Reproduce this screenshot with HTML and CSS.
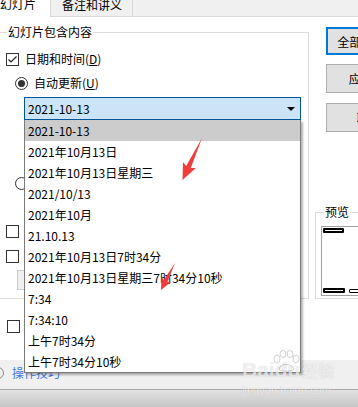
FILE: index.html
```html
<!DOCTYPE html>
<html lang="zh-CN">

<head>
    <meta charset="UTF-8">
    <meta name="viewport" content="width=device-width, initial-scale=1.0">
    <title>页眉和页脚</title>
    <link rel="stylesheet" href="styles.css">
</head>

<body>
    <div class="dialog">
        <div class="tabs">
            <div class="tab active">幻灯片</div>
            <div class="tab">备注和讲义</div>
        </div>

        <div class="panel">
            <div class="left">
                <fieldset class="group main-group">
                    <legend>幻灯片包含内容</legend>
                    <label class="check row-date">
                        <span class="box"><svg width="11" height="11" viewBox="0 0 11 11"><polyline points="1.5,5.5 4,8 9.5,2.5" fill="none" stroke="#222" stroke-width="1.2"/></svg></span>
                        日期和时间(<u>D</u>)
                    </label>
                    <label class="radio row-auto"><span class="dot on"></span>自动更新(<u>U</u>)</label>

                    <div class="combo">
                        <div class="combo-field">2021-10-13<span class="caret"></span></div>
                        <ul class="combo-list">
                            <li class="hover">2021-10-13</li>
                            <li>2021年10月13日</li>
                            <li>2021年10月13日星期三</li>
                            <li>2021/10/13</li>
                            <li>2021年10月</li>
                            <li>21.10.13</li>
                            <li>2021年10月13日7时34分</li>
                            <li>2021年10月13日星期三7时34分10秒</li>
                            <li>7:34</li>
                            <li>7:34:10</li>
                            <li>上午7时34分</li>
                            <li>上午7时34分10秒</li>
                        </ul>
                    </div>

                    <label class="radio row-fixed"><span class="dot"></span>固定(<u>X</u>)</label>
                    <label class="check row-num"><span class="box"></span>幻灯片编号(<u>N</u>)</label>
                    <label class="check row-foot"><span class="box"></span>页脚(<u>F</u>)</label>
                    <div class="text-input"></div>
                </fieldset>
                <label class="check row-title"><span class="box"></span>标题幻灯片中不显示(<u>S</u>)</label>
            </div>

            <div class="right">
                <button class="btn default">全部应用(<u>Y</u>)</button>
                <button class="btn">应用(<u>A</u>)</button>
                <button class="btn last">取消</button>
                <fieldset class="group preview">
                    <legend>预览</legend>
                    <div class="thumb">
                        <div class="bar-row"><span class="bar"></span></div>
                        <div class="bar-row"><span class="bar wide"></span><span class="bar thin"></span></div>
                    </div>
                </fieldset>
            </div>
        </div>

        <div class="footer">
            <span class="help-icon"></span>
            <a class="help-link">操作技巧</a>
        </div>
        <div class="backdrop"></div>

        <!-- 标注箭头 -->
        <svg class="marks" width="358" height="407" viewBox="0 0 358 407">
            <polygon points="202,138 190.8,168.1 195.8,168.1 182.5,180 183,162.3 186.2,165.9" fill="#f23c3c"/>
            <polygon points="175,263 167.3,281.9 171.3,281.7 161,290 161.5,276.7 163.7,280.1" fill="#f23c3c"/>
        </svg>

        <div class="watermark">
            <svg class="wm-paw" width="32" height="22" viewBox="0 0 32 22">
                <g fill="none" stroke="rgba(0,0,0,0.18)" stroke-width="1">
                    <ellipse cx="7" cy="9" rx="3" ry="4"/>
                    <ellipse cx="13" cy="4" rx="3" ry="3.5"/>
                    <ellipse cx="20" cy="4" rx="3" ry="3.5"/>
                    <ellipse cx="26" cy="9" rx="3" ry="4"/>
                    <path d="M9 19 C10 13, 22 13, 24 19 C22 22, 11 22, 9 19 Z"/>
                </g>
            </svg>
            <div class="wm-logo">Baidu<span class="wm-cn">经验</span></div>
            <div class="wm-url">jingyan.baidu.com</div>
        </div>
    </div>
</body>

</html>
```

FILE: styles.css
```css
* {
    box-sizing: border-box;
}

html,
body {
    margin: 0;
    padding: 0;
}

body {
    font-family: "Noto Sans CJK SC", "Noto Sans", sans-serif;
    font-size: 12px;
    color: #000;
    background-color: #fff;
}

.dialog {
    position: relative;
    width: 358px;
    height: 407px;
    overflow: hidden;
    background-color: #fff;
}

/* 标签页 */
.tabs {
    display: flex;
    height: 17px;
    background-color: #f0f0f0;
    border-bottom: 1px solid #d9d9d9;
}

.tab {
    width: 83px;
    height: 16px;
    padding-left: 11px;
    line-height: 10px;
    border-left: 1px solid #d9d9d9;
    border-right: 1px solid #d9d9d9;
    white-space: nowrap;
}

.tab.active {
    width: 50px;
    height: 17px;
    margin-bottom: -1px;
    padding-left: 0;
    line-height: 7px;
    border: none;
    background-color: #fff;
}

.panel {
    display: flex;
    height: 343px;
    background-color: #fff;
}

.left {
    flex: none;
    width: 315px;
}

.right {
    flex: none;
    width: 43px;
}

/* 分组框 */
.group {
    margin: 0;
    padding: 0;
    min-width: 0;
    border: 1px solid #dcdcdc;
}

.group legend {
    margin-left: 8px;
    padding: 0 1px;
    line-height: 12px;
}

.main-group {
    width: 311px;
    margin: 9px 0 0 -2px;
    padding-bottom: 8px;
}

.check,
.radio {
    display: flex;
    align-items: center;
    height: 14px;
    line-height: 14px;
    white-space: nowrap;
}

.box {
    flex: none;
    display: flex;
    align-items: center;
    justify-content: center;
    width: 13px;
    height: 13px;
    margin-right: 6px;
    border: 1px solid #333;
    background-color: #fff;
}

.dot {
    flex: none;
    display: flex;
    align-items: center;
    justify-content: center;
    width: 13px;
    height: 13px;
    margin-right: 6px;
    border: 1px solid #333;
    border-radius: 50%;
}

.dot.on::after {
    content: "";
    width: 7px;
    height: 7px;
    border-radius: 50%;
    background-color: #333;
}

.row-date {
    margin: 14px 0 0 7px;
}

.row-auto {
    margin: 10px 0 0 16px;
}

.row-fixed {
    margin: 56px 0 0 16px;
}

.row-num {
    margin: 34px 0 0 7px;
}

.row-foot {
    margin: 11px 0 0 7px;
}

.row-title {
    margin: 20px 0 0 7px;
}

.text-input {
    width: 284px;
    height: 20px;
    margin: 7px 0 0 18px;
    border: 1px solid #cccccc;
    background-color: #f0f0f0;
}

/* 下拉框 */
.combo {
    position: relative;
    width: 277px;
    height: 23px;
    margin: 7px 0 0 25px;
}

.combo-field {
    display: flex;
    align-items: center;
    height: 23px;
    padding-left: 3px;
    border: 1px solid #005499;
    background-color: #cce4f7;
}

.caret {
    margin-left: auto;
    margin-right: 5px;
    border-top: 4px solid #000;
    border-left: 4px solid transparent;
    border-right: 4px solid transparent;
}

.combo-list {
    position: absolute;
    top: 100%;
    left: 0;
    z-index: 5;
    width: 277px;
    margin: 0;
    padding: 0;
    list-style-type: none;
    background-color: #fff;
    border: 1px solid #7a7a7a;
    border-top: none;
    box-shadow: 2px 2px 2px rgba(0, 0, 0, 0.3);
}

.combo-list li {
    height: 21px;
    padding-left: 3px;
    line-height: 21px;
    white-space: nowrap;
}

.combo-list li.hover {
    background-color: #cccccc;
}

/* 按钮 */
.btn {
    display: block;
    width: 85px;
    height: 29px;
    margin: 9px 0 0 11px;
    padding: 0;
    font: inherit;
    color: #000;
    text-align: center;
    white-space: nowrap;
    background-color: #e1e1e1;
    border: 1px solid #adadad;
}

.btn.default {
    height: 28px;
    margin-top: 10px;
    border: 2px solid #0078d7;
}

.btn.last {
    margin-top: 10px;
}

/* 预览 */
.preview {
    width: 60px;
    margin-top: 74px;
    padding-bottom: 2px;
}

.thumb {
    display: flex;
    flex-direction: column;
    justify-content: space-between;
    width: 60px;
    height: 70px;
    margin: 8px 0 0 5px;
    padding: 1px 0 2px 1px;
    border: 1px solid #a0a0a0;
    background-color: #fff;
}

.bar-row {
    display: flex;
    gap: 4px;
}

.bar {
    width: 21px;
    height: 5px;
    border: 2px solid #000;
    border-radius: 1px;
    background-color: #fff;
}

.bar.wide {
    width: 22px;
}

.bar.thin {
    width: 12px;
    height: 4px;
    margin-top: 1px;
    border-width: 1px;
}

/* 底部 */
.footer {
    display: flex;
    align-items: center;
    height: 30px;
    padding-bottom: 3px;
    background-color: #f0f0f0;
    border-bottom: 1px solid #a9a9a9;
}

.help-icon {
    display: flex;
    align-items: center;
    justify-content: center;
    width: 12px;
    height: 12px;
    margin: 0 8px 0 -8px;
    border: 1px solid #8a8a8a;
    border-radius: 50%;
}

.help-icon::after {
    content: "";
    width: 4px;
    height: 4px;
    border-radius: 50%;
    background-color: #e04848;
}

.help-link {
    color: #3b7ddd;
    line-height: 14px;
}

.backdrop {
    height: 17px;
    background: linear-gradient(#e2e2e2, #c6c6c6);
}

.marks {
    position: absolute;
    left: 0;
    top: 0;
    z-index: 6;
    pointer-events: none;
}

.watermark {
    position: absolute;
    left: 242px;
    top: 356px;
    z-index: 7;
    color: rgba(255, 255, 255, 0.7);
    text-shadow: 0 0 1px rgba(0, 0, 0, 0.2);
    pointer-events: none;
}

.wm-paw {
    position: absolute;
    left: 28px;
    top: -6px;
}

.wm-logo {
    font-family: "Liberation Sans", sans-serif;
    font-size: 21px;
    font-weight: bold;
    line-height: 28px;
}

.wm-cn {
    margin-left: 2px;
    font-family: "Noto Sans CJK SC", sans-serif;
    font-size: 16px;
}

.wm-url {
    font-family: "Liberation Sans", sans-serif;
    font-size: 11px;
    line-height: 12px;
}
```
